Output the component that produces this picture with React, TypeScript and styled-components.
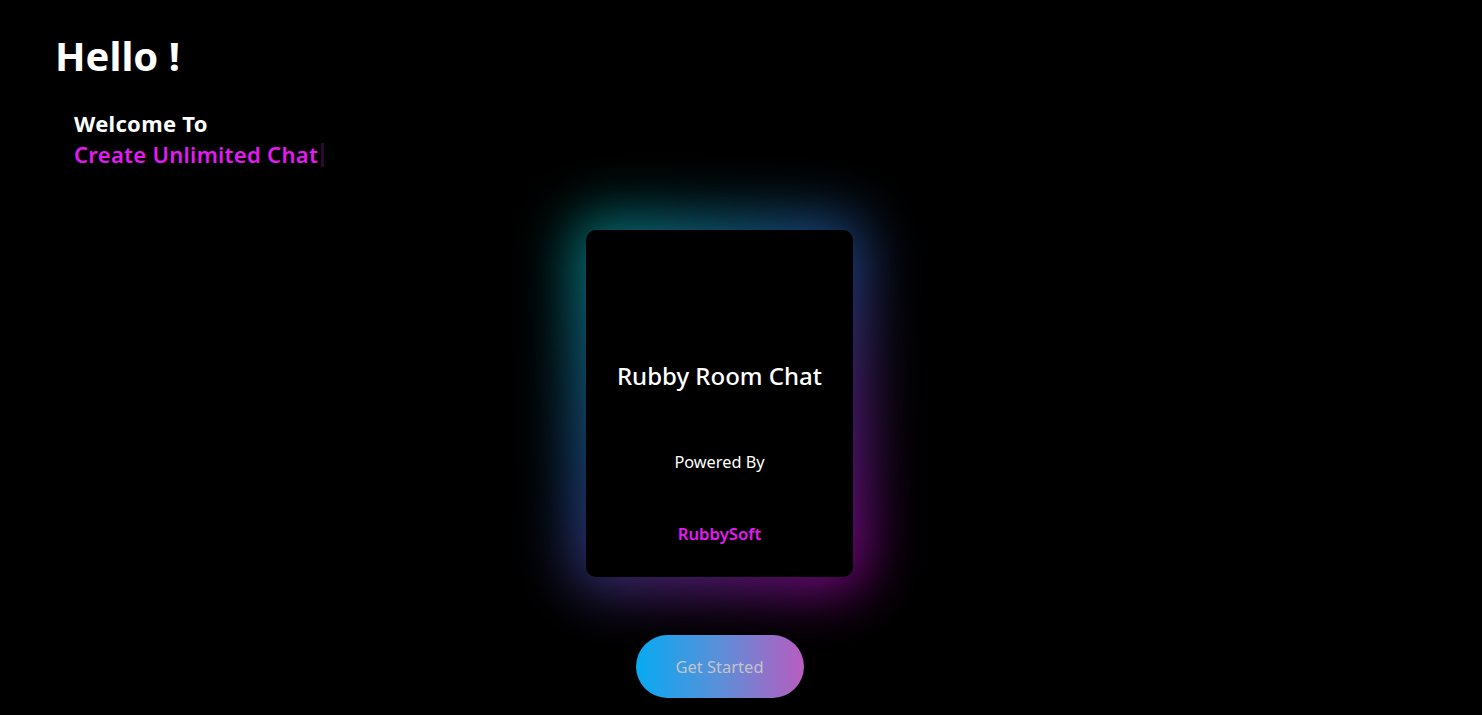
import React from "react";
import styled, { createGlobalStyle } from "styled-components";

const Global = createGlobalStyle`
  html, body { margin: 0; padding: 0; background: #000; }
  body { font-family: "Noto Sans", "Open Sans", sans-serif; color: #fff; }
  #root { min-height: 715px; }
`;

const Page = styled.main`
  display: flex;
  flex-direction: column;
  padding: 32px 0 0 0;
  min-height: 683px;
  overflow: hidden;
`;

const Header = styled.header`
  display: flex;
  flex-direction: column;
  padding-left: 55px;
`;

const Title = styled.h1`
  margin: 0;
  font-size: 40px;
  line-height: 48px;
  font-weight: 700;
  color: #fff;
`;

const Intro = styled.div`
  display: flex;
  flex-direction: column;
  margin: 28px 0 0 19px;
`;

const IntroLine = styled.div<{ $accent?: boolean }>`
  display: flex;
  align-items: center;
  font-size: 22px;
  letter-spacing: 0.3px;
  line-height: 31px;
  font-weight: ${(p) => (p.$accent ? 600 : 700)};
  color: ${(p) => (p.$accent ? "#e31bf2" : "#fff")};
`;

const Caret = styled.span`
  display: inline-block;
  width: 3px;
  height: 24px;
  margin-left: 3px;
  background: #2e0836;
`;

const Center = styled.section`
  display: flex;
  flex-direction: column;
  align-items: center;
  margin-top: 60px;
  padding-right: 43px;
`;

const Glow = styled.div`
  position: relative;
  isolation: isolate;

  &::before {
    content: "";
    position: absolute;
    inset: -14px;
    border-radius: 26px;
    background: linear-gradient(135deg, #00d8c8 0%, #2f6fd0 45%, #7a3ac0 65%, #e400e6 100%);
    filter: blur(28px);
    opacity: 0.6;
    z-index: -1;
  }
`;

const Card = styled.div`
  width: 267px;
  height: 347px;
  box-sizing: border-box;
  border-radius: 10px;
  background: #000;
  display: flex;
  flex-direction: column;
  align-items: center;
  padding-top: 131px;
`;

const CardTitle = styled.h2`
  margin: 0;
  font-size: 24px;
  line-height: 30px;
  font-weight: 500;
  color: #fff;
`;

const CardText = styled.p<{ $accent?: boolean; $gap: number }>`
  margin: ${(p) => p.$gap}px 0 0 0;
  font-size: ${(p) => (p.$accent ? "16.7px" : "16.3px")};
  line-height: 22px;
  font-weight: ${(p) => (p.$accent ? 600 : 400)};
  color: ${(p) => (p.$accent ? "#e31bf2" : "#fff")};
`;

const StartButton = styled.button`
  position: relative;
  margin-top: 58px;
  width: 168px;
  height: 63px;
  border: none;
  border-radius: 32px;
  background: linear-gradient(90deg, #07aaf2 0%, #5b8fd8 50%, #b95cbf 100%);
  color: #c3c3cb;
  font-family: "Noto Sans", "Open Sans", sans-serif;
  font-size: 16.5px;
  cursor: pointer;

  &::before {
    content: "";
    position: absolute;
    inset: 0;
    border: 1px solid #4a4a4a;
    border-radius: 12px;
    z-index: -1;
  }
`;

export default function App() {
  return (
    <>
      <Global />
      <Page>
        <Header>
          <Title>Hello !</Title>
          <Intro>
            <IntroLine>Welcome To</IntroLine>
            <IntroLine $accent>
              Create Unlimited Chat
              <Caret />
            </IntroLine>
          </Intro>
        </Header>
        <Center>
          <Glow>
            <Card>
              <CardTitle>Rubby Room Chat</CardTitle>
              <CardText $gap={60}>Powered By</CardText>
              <CardText $accent $gap={50}>RubbySoft</CardText>
            </Card>
          </Glow>
          <StartButton>Get Started</StartButton>
        </Center>
      </Page>
    </>
  );
}
